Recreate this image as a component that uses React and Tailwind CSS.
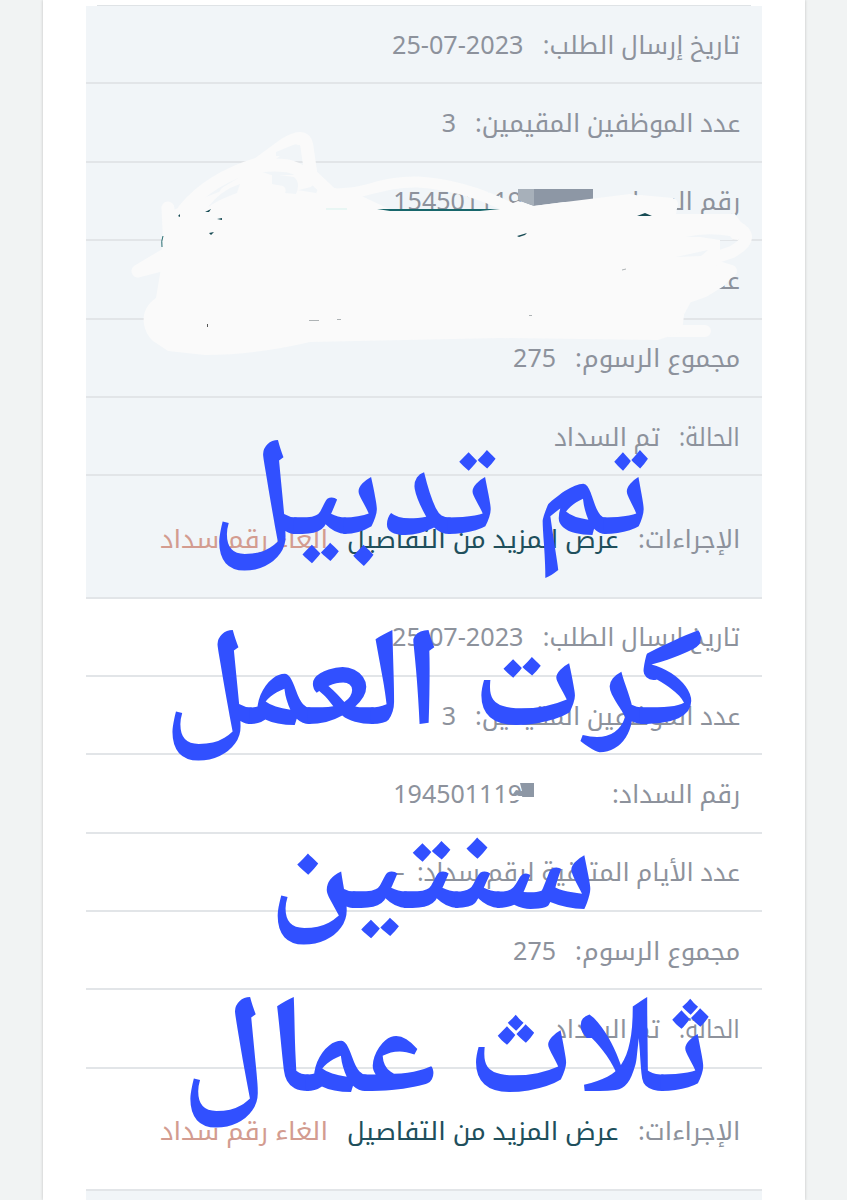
import { useLayoutEffect, useRef, useState } from "react";

// Squeezes or stretches a run of text so that it fills the given width
const FitText = ({ width, className = "", children }) => {
  const ref = useRef(null);
  const [scale, setScale] = useState(1);

  useLayoutEffect(() => {
    const natural = ref.current.offsetWidth;
    if (natural) setScale(width / natural);
  }, [width, children]);

  return (
    <span className="block shrink-0 whitespace-nowrap" style={{ width }}>
      <span
        ref={ref}
        className={`inline-block origin-right ${className}`}
        style={{ transform: `scaleX(${scale})` }}
      >
        {children}
      </span>
    </span>
  );
};

const Row = ({ label, labelWidth, tall, gap = "gap-[19px]", children }) => (
  <div
    className={`flex items-center ${gap} pr-[21.5px] border-b-2 border-[#e2e5e8] ${
      tall ? "h-[122.2px] pb-0 pt-[3px]" : "h-[78.4px] pb-[1px]"
    }`}
  >
    <FitText width={labelWidth}>{label}</FitText>
    {children}
  </div>
);

const Record = ({ number, days, shaded }) => (
  <section className={shaded ? "bg-[#f1f5f8]" : "bg-white"}>
    <Row label="تاريخ إرسال الطلب:" labelWidth={197}>
      <FitText width={132}>25-07-2023</FitText>
    </Row>
    <Row label="عدد الموظفين المقيمين:" labelWidth={265}>
      <FitText width={14}>3</FitText>
    </Row>
    <Row label="رقم السداد:" labelWidth={128} gap="gap-[90px]">
      <FitText width={129}>{number}</FitText>
    </Row>
    <Row label="عدد الأيام المتبقية لرقم سداد:" labelWidth={323} gap="gap-3">
      <FitText width={12}>{days}</FitText>
    </Row>
    <Row label="مجموع الرسوم:" labelWidth={165}>
      <FitText width={43}>275</FitText>
    </Row>
    <Row label="الحالة:" labelWidth={61}>
      <FitText width={106}>تم السداد</FitText>
    </Row>
    <Row label="الإجراءات:" labelWidth={102} tall>
      <FitText width={272} className="text-[#204f5c]">
        عرض المزيد من التفاصيل
      </FitText>
      <FitText width={168} className="text-[#d39c90]">
        الغاء رقم سداد
      </FitText>
    </Row>
  </section>
);

const words = [
  { text: "تم", x: 534, y: 534.5, width: 114.5 },
  { text: "تدبيل", x: 210, y: 534.5, width: 286 },
  { text: "كرت", x: 471.5, y: 725, width: 232 },
  { text: "العمل", x: 163, y: 725, width: 279.5 },
  { text: "سنتين", x: 268, y: 909, width: 329.5 },
  { text: "ثلاث", x: 466.5, y: 1092, width: 242 },
  { text: "عمال", x: 181, y: 1092, width: 256 },
];

const Scribble = () => (
  <g>
    <path d="M518 189H593V202L564 202L534 206L518 200Z" fill="#8d97a5" />
    <path d="M518 189H534V206L518 200Z" fill="#a7b0ba" />
    <g fill="none" stroke="#fafafa" strokeLinecap="round" strokeLinejoin="round">
      <path d="M184 210C202 188 225 174 258 164L284 145Q305 131 307 147L311 175L329 192" strokeWidth="13" />
      <path d="M258 166C286 163 301 166 308 181L285 187L254 176L226 193" strokeWidth="13" />
      <path d="M322 193C365 198 375 181 418 182C453 184 487 195 520 213" strokeWidth="11" />
      <path d="M334 194L360 202L390 216" strokeWidth="12" />
      <path d="M168 208L170 252L138 271L169 263" strokeWidth="13" />
      <path d="M640 201L672 204M690 223L728 223Q762 235 732 252L702 262L731 271L690 291L677 315M660 331H705" strokeWidth="12" />
      <path d="M250 182H300" strokeWidth="14" />
    </g>
    <path
      d="M162 252L164 215L180 207L224 190L260 184L334 196L378 210L499 209L518 201L533 206L630 194L678 203L676 214H735L748 232L738 240L720 238V252L713 264L734 274L724 286L706 297L680 306L684 315L682 332L658 340L500 338L310 342Q255 355 205 355L168 351L153 341C142 331 138 310 156 298L161 268Z"
      fill="#fafafa"
    />
    <path d="M276 152L293 145Q299 142 300 151V157Q288 156 276 156ZM272 174L294 177Q301 183 296 194L285 193Q287 188 283 186L272 184ZM208 207Q221 190 240 184L237 193Q220 199 208 207Z" fill="#f1f5f8" />
    <path d="M686 237Q706 232 730 236L733 240L720 240L700 237ZM676 257L708 250L701 256Z" fill="#f1f5f8" />
    <path d="M377 209L418 209L500 209L480 211H390Z" fill="#17666b" />
    <path d="M637 216L645 213L652 216ZM517 236L527 233L525 235L519 237ZM205 212L211 209L209 212ZM209 233L214 232L211 235ZM217 219L222 218V220ZM178 216L180 214V217Z" fill="#174b54" />
    <path d="M163 236Q161 241 162 247" fill="none" stroke="#286d70" />
    <path d="M326 209H347" stroke="#d7f2ed" />
    <path d="M309 320.5H319M337 319.5H341M529 315.5H532M622 270L626 269" stroke="#aeb3b5" strokeWidth="1" />
    <path d="M207.5 324V327" stroke="#555" />
    <path d="M520 783H534V797H523L513 794L516 790L522 791Z" fill="#8d97a5" />
    <path d="M514 796H522V800H514Z" fill="white" />
  </g>
);

const Annotations = () => (
  <svg
    className="absolute inset-0 h-[1200px] w-[847px]"
    viewBox="0 0 847 1200"
    aria-hidden="true"
  >
    <Scribble />
    <g
      className="font-['Noto_Naskh_Arabic','Noto_Sans_Arabic','DejaVu_Sans',sans-serif] font-bold text-[140px]"
      fill="#3150ff"
    >
      {words.map((word) => (
        <text
          key={word.text}
          x={word.x}
          y={word.y}
          textLength={word.width}
          lengthAdjust="spacingAndGlyphs"
        >
          {word.text}
        </text>
      ))}
    </g>
  </svg>
);

export default function App() {
  return (
    <div className="relative h-[1200px] w-[847px] overflow-hidden bg-[#f1f3f3]">
      <main
        dir="rtl"
        className="mx-auto h-full w-[762px] bg-white px-[43px] shadow-[0_0_3px_rgba(0,0,0,0.2)] font-['Noto_Sans','Noto_Kufi_Arabic','Noto_Sans_Arabic','DejaVu_Sans',sans-serif] text-[25px] leading-9 text-[#8d929c]"
      >
        <div className="mx-[11px] h-[6px] border-b border-[#dfe3e6]" />
        <Record number="154501119" days="–" shaded />
        <Record number="194501119" days="–" />
        <div className="h-3 bg-[#f1f5f8]" />
      </main>
      <Annotations />
    </div>
  );
}
